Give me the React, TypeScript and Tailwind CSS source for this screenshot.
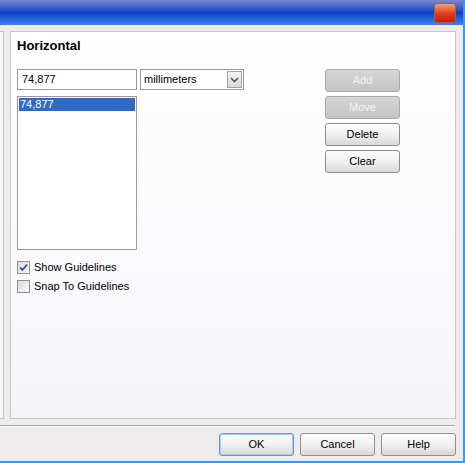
import React from 'react';

const font = { fontFamily: '"Liberation Sans", Arial, sans-serif' };

function XpButton({ label, disabled, focused }: { label: string; disabled?: boolean; focused?: boolean }) {
  if (disabled) {
    return (
      <div className="w-[75px] h-[23px] rounded-[3px] border border-[#a8a8a8] bg-gradient-to-b from-[#d6d6d6] to-[#c4c4c4] flex items-center justify-center text-[11px] text-[#f4f4f4]">
        {label}
      </div>
    );
  }
  return (
    <div
      className={
        'w-[75px] h-[23px] rounded-[3px] border flex items-center justify-center text-[11px] text-black bg-gradient-to-b from-[#fdfdfd] via-[#f0f0f0] to-[#d8d8d8] ' +
        (focused ? 'border-[#5a9ad6] shadow-[inset_0_0_0_1px_#a8cdf0]' : 'border-[#8e8e8e]')
      }
    >
      {label}
    </div>
  );
}

function Checkbox({ label, checked }: { label: string; checked?: boolean }) {
  return (
    <div className="flex items-center gap-[4px] h-[13px]">
      <div className="w-[13px] h-[13px] border border-[#8f8f8f] bg-gradient-to-br from-[#dcdcdc] to-[#fafafa] flex items-center justify-center">
        {checked && (
          <svg width="9" height="9" viewBox="0 0 9 9">
            <path d="M1 4.5 L3.5 7 L8 1.5" stroke="#2a4fa8" strokeWidth="1.8" fill="none" />
          </svg>
        )}
      </div>
      <span className="text-[11px] text-black leading-none">{label}</span>
    </div>
  );
}

export default function App() {
  return (
    <div
      style={font}
      className="w-[465px] h-[463px] flex flex-col bg-[#eeebec] border-r-[2px] border-b-[2px] border-[#3d95ec] overflow-hidden"
    >
      {/* title bar */}
      <div className="h-[25px] shrink-0 bg-gradient-to-b from-[#7a86d4] via-[#0a3fc4] to-[#3f84ea] flex items-center justify-end pr-[7px]">
        <div className="w-[22px] h-[20px] rounded-[3px] border border-[#8a6a5a] bg-gradient-to-b from-[#f4a070] via-[#e0401c] to-[#c81a08]" />
      </div>

      {/* body */}
      <div className="flex-1 flex flex-col pt-[6px]">
        <div className="flex h-[388px]">
          <div className="w-[4px] bg-[#f6f5f6] border-r border-t border-b border-[#c4c2c4]" />
          <div className="ml-[6px] w-[446px] border border-[#c8c6c8] bg-gradient-to-b from-white via-[#fbfafc] to-[#f5f4f6] pl-[6px] pr-[4px] pt-[6px] flex flex-col">
            <div className="text-[13px] font-bold text-black leading-[16px] h-[16px]">Horizontal</div>

            <div className="flex mt-[15px]">
              <div className="flex flex-col">
                <div className="flex gap-[3px]">
                  <div className="w-[120px] h-[21px] border border-[#9a9a9a] bg-white flex items-center pl-[4px] text-[11px]">
                    74,877
                  </div>
                  <div className="w-[104px] h-[21px] border border-[#9a9a9a] bg-white flex items-center pl-[3px] text-[11px] relative">
                    millimeters
                    <div className="absolute right-[1px] top-[1px] w-[15px] h-[17px] border border-[#a4a4a4] bg-gradient-to-b from-[#f4f4f4] to-[#d8d8d8] flex items-center justify-center">
                      <svg width="9" height="6" viewBox="0 0 9 6">
                        <path d="M1 1 L4.5 4.5 L8 1" stroke="#555" strokeWidth="1.6" fill="none" />
                      </svg>
                    </div>
                  </div>
                </div>
                <div className="mt-[6px] w-[120px] h-[154px] border border-[#9a9a9a] bg-white p-[1px]">
                  <div className="h-[13px] bg-[#316ac5] text-white text-[11px] leading-[13px] pl-[1px]">74,877</div>
                </div>
                <div className="mt-[11px] flex flex-col gap-[6px]">
                  <Checkbox label="Show Guidelines" checked />
                  <Checkbox label="Snap To Guidelines" />
                </div>
              </div>

              <div className="ml-[81px] flex flex-col gap-[4px]">
                <XpButton label="Add" disabled />
                <XpButton label="Move" disabled />
                <XpButton label="Delete" />
                <XpButton label="Clear" />
              </div>
            </div>
          </div>
        </div>

        {/* separator */}
        <div className="mt-[6px] mr-[8px] h-[2px] border-t border-[#a8a6a8] border-b border-b-white" />

        {/* bottom buttons */}
        <div className="mt-[6px] flex justify-end gap-[6px] pr-[7px]">
          <XpButton label="OK" focused />
          <XpButton label="Cancel" />
          <XpButton label="Help" />
        </div>
      </div>
    </div>
  );
}
